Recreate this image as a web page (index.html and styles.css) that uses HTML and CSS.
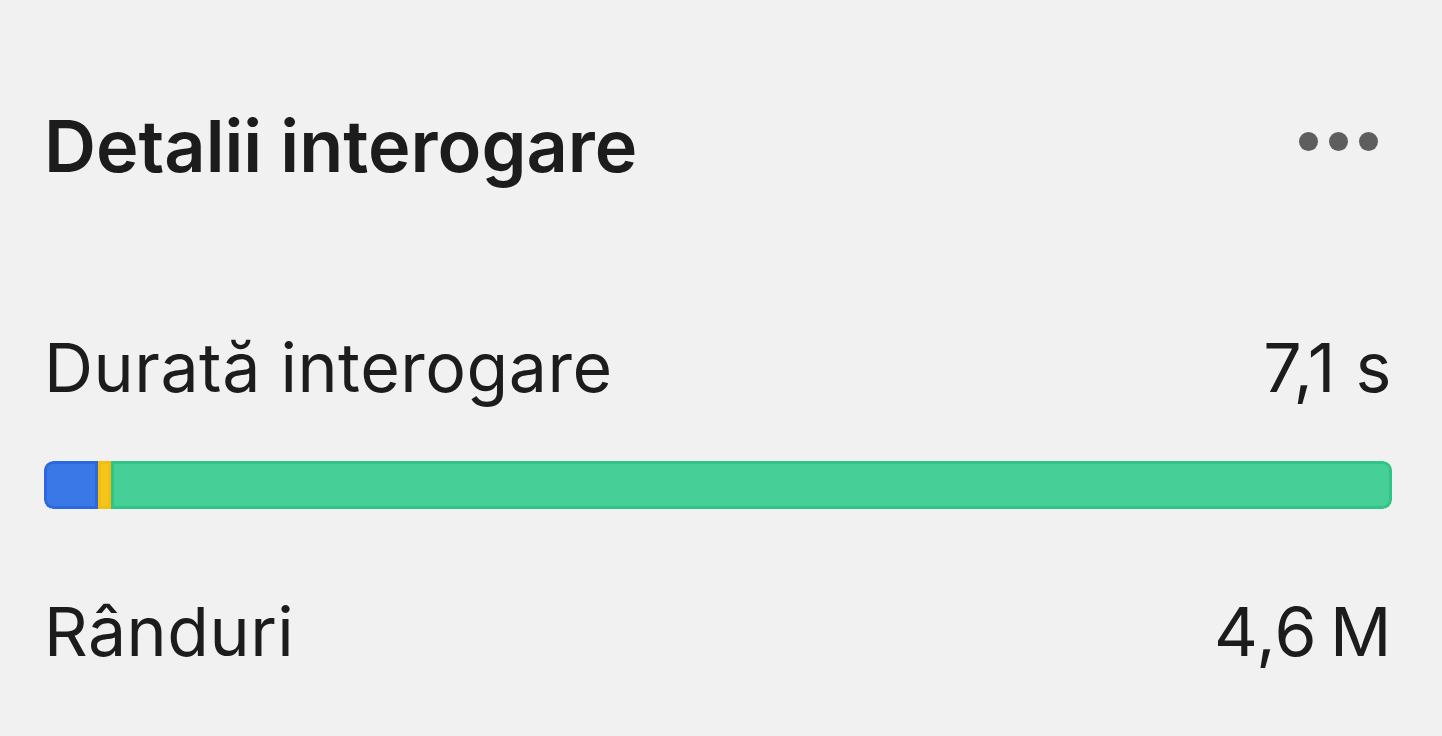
FILE: index.html
```html
<!DOCTYPE html>
<html lang="ro">
<head>
<meta charset="utf-8">
<title>Detalii interogare</title>
<link rel="stylesheet" href="styles.css">
</head>
<body>
<main class="panel">
  <header class="panel-head">
    <h1 class="title">Detalii interogare</h1>
    <button class="more" aria-label="Mai multe">
      <span class="dot"></span><span class="dot"></span><span class="dot"></span>
    </button>
  </header>
  <section class="metric">
    <div class="row">
      <span class="label">Durată interogare</span>
      <span class="value">7,1 s</span>
    </div>
    <div class="bar">
      <div class="seg seg-blue" style="width:54px"></div>
      <div class="seg seg-yellow" style="width:13px"></div>
      <div class="seg seg-green"></div>
    </div>
  </section>
  <section class="metric">
    <div class="row">
      <span class="label">Rânduri</span>
      <span class="value">4,6&#8201;M</span>
    </div>
  </section>
</main>
</body>
</html>
```
FILE: styles.css
```css
html, body {
  margin: 0;
  padding: 0;
  background: #f1f1f1;
}
body {
  font-family: Inter, "Noto Sans", sans-serif;
  color: #1c1c1c;
  width: 1442px;
  height: 736px;
  overflow: hidden;
}
.panel {
  padding: 96px 50px 0 44px;
  display: flex;
  flex-direction: column;
}
.panel-head {
  display: flex;
  align-items: center;
  justify-content: space-between;
  height: 100px;
}
.title {
  margin: 0;
  font-size: 72px;
  font-weight: 600;
  letter-spacing: 0;
  line-height: 100px;
}
.more {
  display: flex;
  gap: 11px;
  background: none;
  border: 0;
  padding: 0;
  margin-right: 14px;
  margin-bottom: 10px;
}
.dot {
  width: 19px;
  height: 19px;
  border-radius: 50%;
  background: #5e5e5e;
}
.metric {
  display: flex;
  flex-direction: column;
}
.row {
  display: flex;
  justify-content: space-between;
  align-items: center;
  font-size: 68px;
  letter-spacing: 0.5px;
  line-height: 90px;
}
.metric:first-of-type .row { margin-top: 126px; }
.metric + .metric .row { margin-top: 77px; }
.bar {
  margin-top: 49px;
  height: 48px;
  display: flex;
  border-radius: 9px;
  overflow: hidden;
}
.seg {
  box-sizing: border-box;
  height: 100%;
  border: 3px solid;
}
.seg-blue {
  background: #3a78e8;
  border-color: #2c69df;
  border-radius: 9px 0 0 9px;
}
.seg-yellow {
  background: #f6c51b;
  border-color: #f3be10;
}
.seg-green {
  flex: 1;
  background: #47cf98;
  border-color: #2ec587;
  border-radius: 0 9px 9px 0;
}
```
